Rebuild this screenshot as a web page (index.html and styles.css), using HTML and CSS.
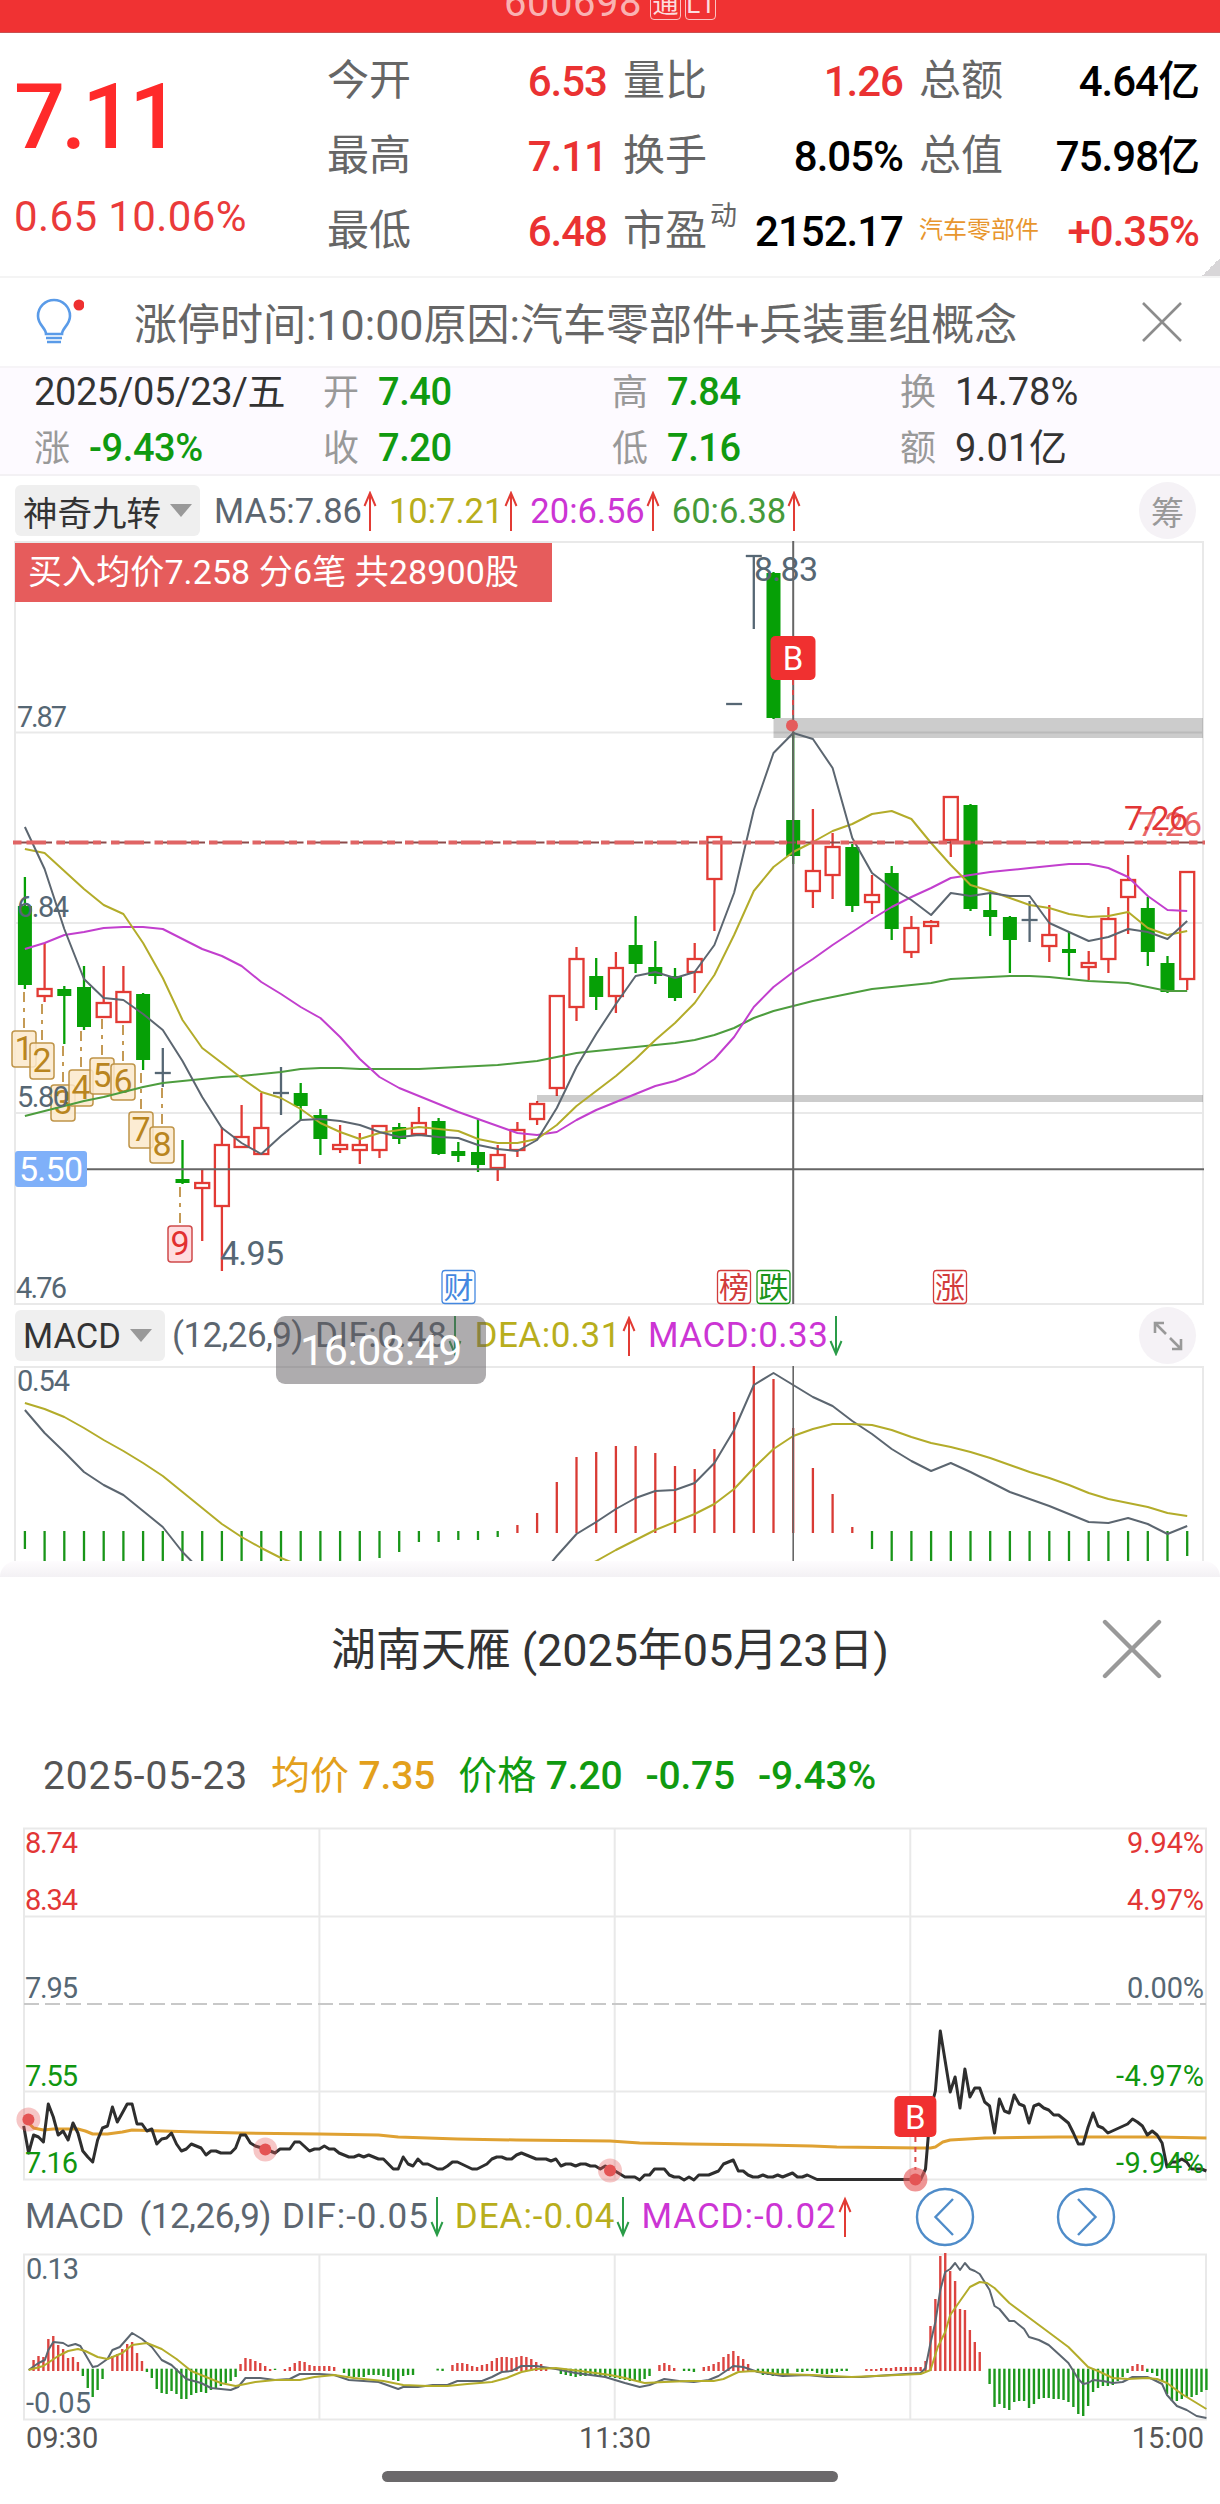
FILE: index.html
```html
<!DOCTYPE html>
<html lang="zh-CN">
<head>
    <meta charset="UTF-8">
    <meta name="viewport" content="width=device-width, initial-scale=1.0">
    <title>湖南天雁 600698</title>
    <link rel="stylesheet" href="styles.css">
</head>
<body>
    <header class="top-bar">
        <span class="code">600698</span>
        <span class="mark">通</span>
        <span class="mark">L1</span>
    </header>

    <section class="quote">
        <div class="price">
            <div class="last">7.11</div>
            <div class="change">0.65 10.06%</div>
        </div>
        <div class="stats">
            <div class="stat"><span>今开</span><b class="up">6.53</b></div>
            <div class="stat"><span>量比</span><b class="up">1.26</b></div>
            <div class="stat"><span>总额</span><b>4.64亿</b></div>
            <div class="stat"><span>最高</span><b class="up">7.11</b></div>
            <div class="stat"><span>换手</span><b>8.05%</b></div>
            <div class="stat"><span>总值</span><b>75.98亿</b></div>
            <div class="stat"><span>最低</span><b class="up">6.48</b></div>
            <div class="stat"><span>市盈<sup>动</sup></span><b>2152.17</b></div>
            <div class="stat"><span class="sector">汽车零部件</span><b class="up">+0.35%</b></div>
        </div>
        <div class="corner"></div>
    </section>

    <section class="notice">
        <svg class="bulb" width="50" height="50" viewBox="0 0 50 50">
            <path d="M12 37C12 31 4 28 4 19a16 16 0 0 1 32 0c0 9-8 12-8 18z" fill="none" stroke="#5a9be8" stroke-width="2.6"/>
            <path d="M12 41h16M13 45h14" stroke="#5a9be8" stroke-width="2.4"/>
            <circle cx="45" cy="8" r="5.5" fill="#ee3030"/>
        </svg>
        <p>涨停时间:10:00原因:汽车零部件+兵装重组概念</p>
        <svg class="notice-close" width="40" height="40" viewBox="0 0 40 40">
            <path d="M1 1L39 39M39 1L1 39" stroke="#8c8c8c" stroke-width="2.6"/>
        </svg>
    </section>

    <section class="ohlc">
        <div class="date">2025/05/23/五</div>
        <div><i>开</i><b class="down">7.40</b></div>
        <div><i>高</i><b class="down">7.84</b></div>
        <div><i>换</i><b class="plain">14.78%</b></div>
        <div><i>涨</i><b class="down">-9.43%</b></div>
        <div><i>收</i><b class="down">7.20</b></div>
        <div><i>低</i><b class="down">7.16</b></div>
        <div><i>额</i><b class="plain">9.01亿</b></div>
    </section>

    <section class="indicator ma-head">
        <button class="picker picker-ma">神奇九转<svg width="22" height="13"><path d="M0 0h22L11 13z" fill="#999"/></svg></button>
        <span class="c-dif">MA5:7.86<svg class="arrow"><use href="#arrow-up"/></svg></span>
        <span class="c-dea">10:7.21<svg class="arrow"><use href="#arrow-up"/></svg></span>
        <span class="c-macd">20:6.56<svg class="arrow"><use href="#arrow-up"/></svg></span>
        <span class="c-ma60">60:6.38<svg class="arrow"><use href="#arrow-up"/></svg></span>
        <span class="round">筹</span>
    </section>

    <div class="kline">
        <svg id="kline" width="1220" height="765"></svg>
        <div class="banner">买入均价7.258 分6笔 共28900股</div>
    </div>

    <section class="indicator macd-head">
        <button class="picker picker-macd">MACD<svg width="22" height="13"><path d="M0 0h22L11 13z" fill="#999"/></svg></button>
        <span class="c-dif args">(12,26,9)</span>
        <span class="c-dif">DIF:0.48<svg class="arrow"><use href="#arrow-down"/></svg></span>
        <span class="c-dea">DEA:0.31<svg class="arrow"><use href="#arrow-up"/></svg></span>
        <span class="c-macd">MACD:0.33<svg class="arrow"><use href="#arrow-down"/></svg></span>
        <span class="round">
            <svg width="30" height="30" viewBox="0 0 30 30"><path d="M13 13L2 2M2 12V2h9M17 17l11 11M28 18v10h-9" fill="none" stroke="#999" stroke-width="2.6"/></svg>
        </span>
        <div class="clock">16:08:49</div>
    </section>

    <svg id="macd" class="macd-chart" width="1220" height="195"></svg>

    <div class="sheet-edge"></div>
    <section class="sheet">
        <div class="sheet-title">
            <h1>湖南天雁 (2025年05月23日)</h1>
            <svg class="sheet-close" width="60" height="60" viewBox="0 0 60 60">
                <path d="M3 3L57 57M57 3L3 57" stroke="#999" stroke-width="4.4" stroke-linecap="round"/>
            </svg>
        </div>
        <div class="legend">
            <span class="day">2025-05-23</span>
            <span class="avg">均价 <b>7.35</b></span>
            <span class="down">价格 <b>7.20</b></span>
            <b class="down">-0.75</b>
            <b class="down">-9.43%</b>
        </div>

        <svg id="minute" class="minute-chart" width="1220" height="366"></svg>

        <div class="indicator minute-head">
            <span class="c-dif args">MACD <em>(12,26,9)</em></span>
            <span class="c-dif">DIF:-0.05<svg class="arrow"><use href="#arrow-down"/></svg></span>
            <span class="c-dea">DEA:-0.04<svg class="arrow"><use href="#arrow-down"/></svg></span>
            <span class="c-macd">MACD:-0.02<svg class="arrow"><use href="#arrow-up"/></svg></span>
            <svg class="nav prev" width="60" height="60" viewBox="0 0 60 60">
                <circle cx="30" cy="30" r="28" fill="none" stroke="#4f8cc9" stroke-width="2.4"/>
                <path d="M38 12L20.500 30 38 48" fill="none" stroke="#4f8cc9" stroke-width="2.4"/>
            </svg>
            <svg class="nav next" width="60" height="60" viewBox="0 0 60 60">
                <circle cx="30" cy="30" r="28" fill="none" stroke="#4f8cc9" stroke-width="2.4"/>
                <path d="M22 12L39.500 30 22 48" fill="none" stroke="#4f8cc9" stroke-width="2.4"/>
            </svg>
        </div>

        <svg id="minuteMacd" class="minute-macd" width="1220" height="172"></svg>

        <div class="axis"><span>09:30</span><span>11:30</span><span>15:00</span></div>
    </section>
    <div class="home-bar"></div>

    <svg width="0" height="0" class="defs">
        <symbol id="arrow-up" viewBox="0 0 14 40"><path d="M7 40V2M1.500 15L7 2l5.500 13" fill="none" stroke="#e23b34" stroke-width="2"/></symbol>
        <symbol id="arrow-down" viewBox="0 0 14 40"><path d="M7 0v38M1.500 25L7 38l5.500-13" fill="none" stroke="#2a9c48" stroke-width="2"/></symbol>
    </svg>
    <script src="charts.js"></script>
</body>
</html>
```
FILE: styles.css
```css
* {
    box-sizing: border-box;
}
body {
    margin: 0;
    width: 1220px;
    height: 2504px;
    overflow: hidden;
    background-color: #fff;
    font-family: Roboto, "Noto Sans CJK SC", sans-serif;
    color: #333;
}
svg {
    display: block;
    flex: none;
}
b {
    font-weight: 500;
}
.up {
    color: #ea3232;
}
.down {
    color: #109a10;
}
.defs {
    position: absolute;
}

/* top bar */
.top-bar {
    display: flex;
    justify-content: center;
    align-items: flex-end;
    gap: 4px;
    height: 33px;
    padding-bottom: 12px;
    overflow: hidden;
    background-color: #f03233;
    border-bottom: 1px solid #c95050;
    color: rgba(255, 255, 255, 0.65);
}
.code {
    font-size: 40px;
    line-height: 34px;
    margin-right: 4px;
    letter-spacing: 0.5px;
}
.mark {
    width: 31px;
    height: 32px;
    border: 1.5px solid rgba(255, 255, 255, 0.7);
    border-radius: 4px;
    font-size: 26px;
    line-height: 30px;
    text-align: center;
    color: rgba(255, 255, 255, 0.85);
}

/* quote */
.quote {
    position: relative;
    display: flex;
    height: 243px;
    padding-top: 10px;
}
.price {
    width: 327px;
    padding: 23px 0 0 14px;
    color: #ff2a2a;
}
.last {
    font-size: 90px;
    font-weight: 500;
    line-height: 104px;
    letter-spacing: -4px;
}
.change {
    margin-top: 17px;
    font-size: 42px;
    line-height: 60px;
    letter-spacing: 0.4px;
    color: #ea3a3a;
}
.stats {
    display: grid;
    grid-template-columns: 280px 280px 280px;
    grid-auto-rows: 75px;
    column-gap: 16px;
}
.stat {
    display: flex;
    justify-content: space-between;
    align-items: center;
    font-size: 42px;
    line-height: 75px;
    color: #666;
    white-space: nowrap;
}
.stat b {
    position: relative;
    top: 1px;
    color: #000;
    letter-spacing: -1px;
    font-weight: 500;
}
.stat b.up {
    color: #ea3232;
}
.stat sup {
    display: inline-block;
    font-size: 27px;
    line-height: 27px;
    vertical-align: 20px;
    margin-left: 3px;
}
.stat .sector {
    font-size: 24px;
    color: #e8962e;
}
.corner {
    position: absolute;
    right: 0;
    bottom: 0;
    width: 18px;
    height: 18px;
    background: linear-gradient(135deg, transparent 50%, #d8d6d8 50%);
}

/* notice */
.notice {
    display: flex;
    align-items: center;
    height: 92px;
    padding-left: 34px;
    border-top: 2px solid #f4f4f4;
    border-bottom: 2px solid #f6f4f7;
}
.notice p {
    width: 1058px;
    margin: -3px 0 0;
    padding-left: 50px;
    font-size: 43px;
    color: #666;
    white-space: nowrap;
}

/* open high low close */
.ohlc {
    display: grid;
    grid-template-columns: 289px 289px 288px 300px;
    grid-auto-rows: 48px;
    row-gap: 8px;
    height: 108px;
    padding: 0 0 0 34px;
    background-color: #fdfaff;
    border-bottom: 2px solid #f3f1f4;
    font-size: 38px;
    line-height: 48px;
    white-space: nowrap;
}
.ohlc i {
    font-style: normal;
    font-size: 36px;
    color: #999;
    margin-right: 19px;
}
.ohlc b {
    font-weight: 500;
    letter-spacing: -0.4px;
}
.ohlc .plain {
    font-weight: 400;
    letter-spacing: 0;
}
.date {
    letter-spacing: -0.4px;
}

/* indicator rows */
.indicator {
    position: relative;
    display: flex;
    align-items: center;
    font-size: 35px;
    white-space: nowrap;
}
.indicator span {
    display: flex;
    align-items: center;
}
.indicator em {
    font-style: normal;
    margin-left: 15px;
    letter-spacing: -0.5px;
}
.arrow {
    width: 14px;
    height: 40px;
    margin-left: 1px;
}
.ma-head {
    height: 64px;
    padding: 9px 24px 4px 15px;
    font-size: 34.5px;
    gap: 12px;
}
.macd-head {
    height: 61px;
    padding: 5px 24px 5px 15px;
    gap: 12px;
    letter-spacing: 0.5px;
}
.macd-head .args {
    margin-left: -5px;
    letter-spacing: -0.6px;
}
.picker {
    display: flex;
    align-items: center;
    gap: 9px;
    height: 51px;
    padding: 0 0 0 8px;
    border: 0;
    border-radius: 6px;
    background-color: #efefef;
    font-family: inherit;
    font-size: 34.5px;
    color: #333;
}
.picker-ma {
    width: 185px;
    margin-right: 2px;
}
.picker-macd {
    width: 150px;
}
.c-dif {
    color: #5c6670;
}
.c-dea {
    color: #b8ae1c;
}
.c-macd {
    color: #cc35d4;
}
.c-ma60 {
    color: #459a3a;
}
.indicator .round {
    justify-content: center;
    width: 57px;
    height: 57px;
    margin: -3px 0 -3px auto;
    border-radius: 50%;
    background-color: #f5f2f6;
    font-size: 33px;
    color: #999;
}
.clock {
    position: absolute;
    left: 276px;
    top: 11px;
    z-index: 2;
    width: 210px;
    height: 68px;
    border-radius: 9px;
    background-color: rgba(93, 90, 93, 0.5);
    font-size: 43px;
    line-height: 69px;
    text-align: center;
    color: #fff;
    letter-spacing: -0.5px;
}

/* charts */
.kline {
    position: relative;
    height: 765px;
}
.banner {
    position: absolute;
    left: 15px;
    top: 3px;
    width: 537px;
    height: 59px;
    padding-left: 13px;
    background-color: #e65c5c;
    font-size: 34px;
    line-height: 58px;
    letter-spacing: 0.1px;
    color: #fff;
    white-space: nowrap;
}
.macd-chart {
    overflow: hidden;
}
.minute-chart,
.minute-macd {
    overflow: visible;
}
.label {
    font-size: 29px;
    fill: #566774;
}
.label-big {
    font-size: 34px;
    fill: #566774;
}
.t-red {
    fill: #e23636;
}
.t-green {
    fill: #109610;
}
.grid {
    stroke: #e9e9e9;
    stroke-width: 2;
    fill: none;
}
.tag {
    font-size: 30px;
    text-anchor: middle;
}
.buy {
    font-size: 33px;
    fill: #fff;
    text-anchor: middle;
}

/* bottom sheet */
.sheet-edge {
    height: 16px;
    border-radius: 24px 24px 0 0;
    background: linear-gradient(#fefcfe, #f3f1f4);
}
.sheet {
    background-color: #fff;
}
.sheet-title {
    position: relative;
    display: flex;
    justify-content: center;
    align-items: center;
    height: 144px;
}
.sheet-title h1 {
    margin: -5px 0 0;
    font-size: 45px;
    font-weight: 400;
    letter-spacing: -0.1px;
    color: #333;
}
.sheet-close {
    position: absolute;
    right: 58px;
    top: 42px;
}
.legend {
    display: flex;
    align-items: baseline;
    height: 99px;
    padding: 32px 0 0 43px;
    gap: 23px;
    font-size: 39px;
    line-height: 46px;
    color: #555;
}
.legend .day {
    letter-spacing: 0.8px;
}
.legend b {
    letter-spacing: -0.2px;
}
.legend .avg {
    color: #e3a01c;
}
.minute-head {
    height: 64px;
    padding: 0 0 3px 25px;
    gap: 11px;
    letter-spacing: 0.95px;
}
.minute-head .args {
    letter-spacing: 0;
}
.minute-head .arrow {
    height: 48px;
    width: 14px;
}
.nav.prev {
    margin-left: 52px;
}
.nav.next {
    margin-left: 70px;
}
.axis {
    display: flex;
    justify-content: space-between;
    height: 34px;
    padding: 0 16px 0 26px;
    font-size: 29px;
    line-height: 32px;
    color: #555;
}
.home-bar {
    width: 456px;
    height: 11px;
    margin: 15px auto 0;
    border-radius: 6px;
    background-color: #6b696b;
}
```
FILE: charts.js
```js
const RED = '#e23a34';
const GREEN = '#06a006';
const GREY = '#566774';

function el(svg, tag, attrs, text) {
    const node = document.createElementNS('http://www.w3.org/2000/svg', tag);
    for (const key in attrs) node.setAttribute(key, attrs[key]);
    if (text !== undefined) node.textContent = text;
    svg.appendChild(node);
    return node;
}
function line(svg, x1, y1, x2, y2, stroke, width, extra) {
    el(svg, 'line', Object.assign({ x1, y1, x2, y2, stroke, 'stroke-width': width }, extra));
}
function curve(svg, points, stroke, width) {
    el(svg, 'polyline', { points: points.map(p => p.join(',')).join(' '), fill: 'none', stroke, 'stroke-width': width, 'stroke-linejoin': 'round' });
}
function label(svg, x, y, text, cls, width, anchor) {
    const attrs = { x, y, class: cls };
    if (width) attrs.textLength = width;
    if (anchor) attrs['text-anchor'] = anchor;
    return el(svg, 'text', attrs, text);
}

// ---- daily K line ----
const dayX = i => 24.9 + 19.7 * i;
const k = document.getElementById('kline');

// kind, high, body top, body bottom, low
const candles = [
    ['g', 337, 366, 445, 449], ['r', 403, 449, 456, 462], ['g', 446, 449, 456, 504], ['g', 426, 447, 487, 490],
    ['r', 426, 463, 477, 477], ['r', 426, 452, 482, 482], ['g', 453, 454, 520, 530], ['x', 508, 533, 533, 547],
    ['g', 600, 639, 643, 644], ['r', 630, 643, 648, 701], ['r', 587, 605, 666, 731], ['r', 565, 597, 607, 607],
    ['r', 553, 588, 614, 614], ['x', 527, 553, 553, 575], ['g', 543, 553, 566, 580], ['g', 569, 575, 599, 615],
    ['r', 585, 605, 609, 613], ['r', 593, 605, 610, 624], ['r', 586, 586, 610, 618], ['g', 583, 587, 599, 604],
    ['r', 567, 583, 594, 594], ['g', 578, 581, 614, 615], ['g', 602, 611, 616, 622], ['g', 579, 612, 625, 632],
    ['r', 605, 615, 628, 641], ['r', 582, 590, 610, 617], ['r', 561, 564, 579, 585], ['r', 455, 456, 548, 556],
    ['r', 407, 419, 467, 481], ['g', 418, 436, 457, 470], ['r', 412, 428, 456, 473], ['g', 376, 405, 424, 433],
    ['g', 401, 427, 436, 444], ['g', 428, 436, 458, 461], ['r', 403, 419, 432, 453], ['r', 297, 297, 339, 391],
    ['x', 164, 164, 164, 164], ['x', 16, 16, 16, 89], ['g', 32, 33, 178, 179], ['g', 192, 280, 316, 324],
    ['r', 269, 331, 351, 368], ['r', 293, 307, 335, 359], ['g', 304, 307, 366, 372], ['r', 335, 355, 362, 374],
    ['g', 326, 333, 389, 400], ['r', 376, 388, 412, 418], ['r', 380, 382, 386, 404], ['r', 257, 257, 300, 317],
    ['g', 264, 265, 369, 371], ['g', 353, 370, 377, 396], ['g', 376, 377, 400, 433], ['x', 361, 380, 380, 402],
    ['r', 365, 395, 406, 422], ['g', 392, 409, 413, 436], ['r', 411, 423, 427, 440], ['r', 367, 379, 419, 433],
    ['r', 315, 340, 357, 394], ['g', 357, 368, 412, 426], ['g', 416, 423, 452, 453], ['r', 332, 332, 439, 450]
];
const ma5 = [287, 329, 389, 439, 458, 460, 474, 490, 521, 557, 588, 603, 614, 596, 580, 579, 581, 585, 592, 597, 595, 597, 598, 605, 609, 611, 600, 568, 527, 494, 464, 436, 432, 438, 432, 405, 353, 270, 213, 193, 199, 228, 298, 333, 348, 360, 375, 353, 356, 353, 356, 356, 383, 392, 401, 397, 389, 392, 399, 381];
const ma10 = [309, 313, 331, 349, 365, 374, 403, 438, 480, 508, 523, 538, 552, 558, 569, 583, 592, 599, 593, 590, 587, 589, 591, 599, 603, 603, 599, 585, 566, 551, 536, 519, 500, 483, 463, 435, 395, 351, 327, 312, 302, 291, 284, 274, 271, 279, 303, 325, 345, 351, 358, 365, 368, 374, 377, 376, 372, 388, 395, 391];
const ma20 = [409, 403, 395, 392, 388, 387, 387, 389, 399, 409, 416, 426, 442, 454, 467, 478, 497, 519, 537, 548, 556, 564, 572, 579, 586, 593, 595, 592, 580, 570, 562, 554, 546, 541, 533, 519, 497, 467, 447, 432, 419, 405, 392, 379, 367, 357, 348, 338, 335, 332, 330, 328, 326, 324, 324, 328, 337, 356, 370, 371];
const ma60 = [576, 571, 566, 561, 557, 552, 547, 543, 541, 539, 537, 536, 534, 532, 529, 528, 528, 529, 529, 529, 529, 528, 527, 526, 525, 523, 521, 517, 513, 511, 509, 507, 505, 503, 500, 495, 488, 478, 471, 466, 461, 457, 453, 449, 447, 445, 443, 439, 438, 437, 436, 436, 437, 439, 441, 442, 443, 447, 451, 451];

el(k, 'rect', { x: 15, y: 2, width: 1188, height: 762, class: 'grid' });
[192.5, 383, 573].forEach(y => el(k, 'path', { d: `M15 ${y}H1203`, class: 'grid' }));

candles.forEach(([kind, high, top, bottom, low], i) => {
    const x = dayX(i);
    if (kind === 'g') {
        line(k, x, high, x, low, GREEN, 2.3);
        el(k, 'rect', { x: x - 7, y: top, width: 14, height: bottom - top, fill: GREEN });
    } else if (kind === 'r') {
        line(k, x, high, x, top, RED, 2.3);
        line(k, x, bottom, x, low, RED, 2.3);
        el(k, 'rect', { x: x - 7, y: top, width: 14, height: bottom - top, fill: 'none', stroke: RED, 'stroke-width': 2.3 });
    } else {
        line(k, x, high, x, low, GREY, 2.3);
        line(k, x - 8, top, x + 8, top, GREY, 2.3);
    }
});

el(k, 'rect', { x: 773.5, y: 178, width: 429.5, height: 20, fill: '#000', 'fill-opacity': 0.2 });
el(k, 'rect', { x: 537, y: 555, width: 666, height: 7, fill: '#000', 'fill-opacity': 0.2 });

// magic nine-turn badges
const turns = [[24, 491], [42, 503], [63, 545], [81, 530], [102, 518], [123, 524], [141, 572], [162, 587], [180, 686]];
turns.forEach(([x, y], i) => {
    const last = i === 8;
    line(k, x, y - 39, x, y, '#c49a55', 2, { 'stroke-dasharray': '10 6 4 6' });
    el(k, 'rect', { x: x - 12, y: y, width: 24, height: 36, rx: 3, fill: last ? '#ffdde0' : '#fbe9cb', 'fill-opacity': last ? 1 : 0.85, stroke: last ? '#cf4a4a' : '#bf9448', 'stroke-width': 1.5 });
    const t = label(k, x, y + 29, String(i + 1), 'label-big', 0, 'middle');
    t.style.fill = last ? '#e23030' : '#b98520';
});

curve(k, ma60.map((y, i) => [dayX(i), y]), '#4d9d3e', 2);
curve(k, ma20.map((y, i) => [dayX(i), y]), '#c23fce', 2);
curve(k, ma10.map((y, i) => [dayX(i), y]), '#b3ac2a', 2);
curve(k, ma5.map((y, i) => [dayX(i), y]), '#5c6670', 2);

// cost line
line(k, 13, 302.5, 1205, 302.5, '#8c4a4a', 2, { 'stroke-dasharray': '39 4.500 50 5' });
line(k, 13, 302.5, 1205, 302.5, '#e06464', 4, { 'stroke-dasharray': '8.500 5 19.500 10.500 8.500 4 19.500 4.500 8 10' });

label(k, 17, 187, '7.87', 'label', 50);
label(k, 17, 377, '6.84', 'label', 52);
label(k, 17, 567, '5.80', 'label', 52);
label(k, 16, 758, '4.76', 'label', 51);
label(k, 754, 41, '8.83', 'label-big', 64);
label(k, 220, 725, '4.95', 'label-big', 64);
label(k, 1124, 290, '7.26', 'label-big t-red', 64);
label(k, 1138, 296, '7.26', 'label-big t-red', 64).style.opacity = 0.75;

// crosshair
line(k, 793.2, 1, 793.2, 764, '#666', 2);
line(k, 15, 629.3, 1204, 629.3, '#666', 2);
el(k, 'rect', { x: 15, y: 611, width: 72, height: 36, rx: 3, fill: '#7fb0f9' });
label(k, 19, 641, '5.50', 'label-big', 64).style.fill = '#fff';

function buyMark(svg, x, y, w, h, dotY) {
    line(svg, x, y + h, x, dotY - 8, '#d94848', 2, { 'stroke-dasharray': '5 5' });
    el(svg, 'rect', { x: x - w / 2, y, width: w, height: h, rx: 5, fill: '#f03030' });
    label(svg, x, y + h / 2 + 12, 'B', 'buy');
}
buyMark(k, 793, 96, 45, 44, 186);
el(k, 'circle', { cx: 792, cy: 185.5, r: 6, fill: '#e45c5c' });

[[458.500, '财', '#4488e0'], [734, '榜', '#d23c3c'], [773.5, '跌', '#1a951a'], [950, '涨', '#d23c3c']].forEach(([x, text, color]) => {
    el(k, 'rect', { x: x - 16.5, y: 730.5, width: 33, height: 33, rx: 3, fill: '#fff', stroke: color, 'stroke-width': 1.3 });
    label(k, x, 758, text, 'tag').style.fill = color;
});

// ---- daily MACD ----
const m = document.getElementById('macd');
el(m, 'path', { d: 'M15 200V1H1203V200', class: 'grid' });
const macdBars = [183, 195, 195, 195, 195, 195, 195, 195, 195, 195, 195, 195, 195, 195, 195, 195, 195, 195, 192, 186, 176, 176, 174, 174, 171, 159, 147, 116, 91, 86, 80, 80, 87, 100, 103, 83, 46, 0, 13, 62, 102, 128, 161, 183, 195, 195, 195, 195, 195, 195, 195, 195, 195, 195, 195, 195, 195, 195, 195, 190];
const dif = [44, 67, 86, 106, 119, 129, 145, 161, 186, 206, 230, 250, 260, 270, 280, 290, 300, 300, 300, 300, 300, 300, 290, 280, 260, 238, 214, 190, 168, 156, 143, 132, 125, 124, 117, 97, 64, 19, 7, 19, 31, 40, 55, 68, 83, 95, 105, 97, 106, 116, 126, 133, 140, 148, 156, 157, 152, 158, 168, 160];
const dea = [37, 43, 51, 62, 74, 85, 97, 110, 126, 142, 158, 171, 182, 192, 200, 210, 220, 230, 240, 245, 250, 250, 250, 245, 240, 235, 228, 217, 206, 195, 184, 174, 164, 156, 148, 138, 123, 102, 83, 70, 63, 58, 58, 59, 64, 71, 77, 81, 86, 92, 99, 106, 112, 119, 127, 133, 137, 141, 147, 150];
macdBars.forEach((y, i) => {
    const up = y < 165;
    line(m, dayX(i), y, dayX(i), up ? 167 : 165, up ? '#d93a34' : '#189518', 2.3);
});
curve(m, dif.map((y, i) => [dayX(i), y]), '#5c6670', 2);
curve(m, dea.map((y, i) => [dayX(i), y]), '#b3ac2a', 2);
line(m, 793.2, 0, 793.2, 195, '#666', 1.6);
label(m, 17, 25, '0.54', 'label', 53);

// ---- minute price ----
const minX = i => 23.7 + 4.928 * i;
const p = document.getElementById('minute');
const minuteLine = '0,306 1,333 2,315 3,317 4,322 5,284 6,297 7,315 8,311 9,320 10,303 11,313 12,331 13,337 14,342 15,320 16,308 17,306 18,287 19,302 20,293 21,284 22,284 23,304 24,304 25,311 26,309 27,324 28,319 29,318 30,313 31,324 32,331 33,329 34,324 35,326 36,328 37,335 38,331 39,331 40,333 42,333 43,328 44,315 45,315 46,323 47,326 49,329 51,333 52,329 54,329 55,322 56,322 58,331 59,329 60,329 61,326 62,329 63,329 64,333 66,337 67,337 68,335 69,337 70,335 72,339 73,339 75,349 76,349 77,337 78,344 79,346 80,339 81,344 82,344 84,349 85,349 86,346 87,342 88,342 91,349 92,349 94,344 95,339 96,337 97,337 98,339 99,339 100,335 101,333 104,339 106,339 107,341 108,339 109,346 110,344 111,344 112,346 113,344 114,344 115,346 116,346 117,349 118,346 119,350 120,351 122,357 124,357 125,360 126,355 127,355 128,349 130,349 131,355 132,357 133,357 134,360 135,357 136,360 137,355 139,355 141,351 142,344 144,340 145,351 146,351 147,355 148,357 149,357 150,355 151,357 152,357 153,355 154,357 156,353 157,357 158,357 159,355 161,359.500 182,359.500 183,349 184,290 185,271 186,211 188,272 189,257 190,288 191,249 192,277 193,268 194,268 195,282 196,286 197,313 198,279 199,291 200,293 201,275 202,284 203,286 204,303 205,286 206,284 207,288 208,290 209,295 210,295 212,303 213,313 214,324 215,324 216,307 217,293 218,306 219,308 220,313 224,304 225,299 226,302 227,306 228,315 229,311 230,315 231,323 232,347 233,342 234,342 235,339 236,342 237,349 239,349 240,351';
const averageLine = '1,303 2,308 4,310 6,309 11,309 12.5,311 14,314 17,314 20,312 22,310 28,311 35,312 44,313 60,314 72,315 76,317 88,319 100,320 119,321 125,323 135,324 150,325 160,326 165,327 182,328 184,328 185,327 186.5,322 188,320 195,318 210,317 230,317 240,318';
const difLine = '1,120 3,113 4.3,110 5,100 6,92 8,93 9,96 10.5,94 11.5,96 14,117 15,116 17,109 18,100 19.5,97 22,83 24,89 26,97 28,110 30,115 33,129 36,133 38,138 42,140 43.5,137 45,128 48,128 51,130 54,129 56,124 60,124 63,125 66,130 72,132 76,139 77,137 80,137 83,135 86,135 88,131 93,131 95,127 97,122 99,121 101,116 104,116 108,119 112,123 118,127 122,133 125,137 127,135 130,129 133,131 136,132 139,130 141,126 144,116 146,117 149,122 154,126 159,125 163,127 170,127 182,123 183,118 184,93 185,72 186,40 187,22 188,19 189,13 190,20 191,13 192,19 193,21 194,24 196,40 197,56 198,59 200,71 201,71 203,79 204,87 206,90 208,95 210,104 212,113 214,129 215,134 216,133 217,130 219,131 221,133 223,132 225,127 228,127 229,129 231,134 232,145 234,156 236,160 238,166 240,168';
const deaLine = '1,120 4,116 7,106 9,101 11,99 12.5,101 15,107 17,109 20,103 22,95 25,93 28,99 31,109 34,121 37,127 40,133 43,136 47,132 51,130 56,130 59,127 63,125 67,128 73,131 77,135 82,136 86,136 90,134 95,132 98,128 101,122 104,119 108,118 113,121 119,125 122,128 126,133 130,132 135,131 140,131 142,129 145,122 148,121 153,124 160,125 168,127 182,124 184,120 185.5,97 187,82 188,65 190,51 192,37 194,32 195.5,33 197,38 200,53 203,64 206,75 209,86 212,97 214,107 216,117 218,121 221,128 224,129 228,128 230,129 232,133 235,144 238,153 240,159';
const parse = s => s.split(' ').map(pair => {
    const [i, y] = pair.split(',').map(Number);
    return [minX(i).toFixed(1), y];
});

el(p, 'rect', { x: 24, y: 8.5, width: 1182, height: 351, class: 'grid' });
[319.4, 614.7, 910.3].forEach(x => el(p, 'path', { d: `M${x} 8.5V359.5`, class: 'grid' }));
[96.5, 271.5].forEach(y => el(p, 'path', { d: `M24 ${y}H1206`, class: 'grid' }));
line(p, 24, 184, 1206, 184, '#c8c8c8', 2, { 'stroke-dasharray': '15 6' });
curve(p, parse(averageLine), '#dfa132', 3);
curve(p, parse(minuteLine), '#2e2e2e', 3);
[['8.74', 33, 't-red', '9.94%'], ['8.34', 90, 't-red', '4.97%'], ['7.95', 178, '', '0.00%'], ['7.55', 266, 't-green', '-4.97%'], ['7.16', 353, 't-green', '-9.94%']].forEach(([left, y, cls, right]) => {
    label(p, 25, y, left, 'label ' + cls, 53);
    label(p, 1204, y, right, 'label ' + cls, right[0] === '-' ? 88 : 77, 'end');
});
buyMark(p, 915.4, 276, 42, 41, 358);
[[28.4, 299.5], [265.3, 329.5], [610, 350.5], [915.4, 359.5]].forEach(([x, y], i) => {
    el(p, 'circle', { cx: x, cy: y, r: 12, fill: '#e65c5c', 'fill-opacity': i === 3 ? 0.65 : 0.35 });
    el(p, 'circle', { cx: x, cy: y, r: 6, fill: '#e45454' });
});

// ---- minute MACD ----
const q = document.getElementById('minuteMacd');
el(q, 'rect', { x: 24, y: 4.5, width: 1182, height: 165, class: 'grid' });
[319.4, 614.7, 910.3].forEach(x => el(q, 'path', { d: `M${x} 4.5V169.5`, class: 'grid' }));
// runs of bars: first minute, then one end point per minute
const runs = [
    [2, 110, 106, 107, 89, 86, 95, 99, 108, 107, 112, 126, 138, 147, 140, 129],
    [18, 106, 104, 99, 94, 92, 103, 111, 122, 128, 139, 143, 144, 141, 144, 149, 149, 145, 143, 142, 143, 140, 138, 136, 133, 131, 127, 114, 108, 109, 111, 113, 116, 119, 120],
    [53, 119, 117, 113, 111, 112, 115, 116, 116, 116, 116, 117],
    [65, 123, 126, 127, 127, 127, 125, 125, 125, 126, 127, 130, 131, 126, 125, 125],
    [84, 120.5, 121],
    [87, 115, 113, 113, 114, 116, 117, 115, 114, 111, 108, 107, 107, 108, 107, 106, 107, 109, 112, 114, 117],
    [109, 124, 125, 126, 127, 126, 126, 125, 126, 127, 127, 127, 128, 129, 130, 131, 131, 131, 129, 126],
    [129, 115, 113, 115, 118], [134, 121, 121, 122],
    [138, 117, 116, 114, 112, 107, 104, 101, 106, 109, 114],
    [149, 123, 125, 125, 126, 126, 125, 124], [157, 122, 122, 121, 121, 123, 124, 124, 123, 122, 121, 121],
    [171, 119, 119, 119, 118, 118, 118, 117, 117, 117, 117, 117, 117, 111, 76, 49, 6, 3, 21, 31, 59, 60, 80, 92, 102],
    [196, 134, 157, 154, 158, 160, 152, 151, 151, 158, 154, 149, 148, 148, 149, 149, 150, 152, 157, 164, 166, 156, 142, 138, 136, 136, 135, 131, 127, 123, 116, 114, 115, 122, 123, 126, 131, 144, 151, 151, 149, 147, 147, 145, 142, 140]
];
runs.forEach(([start, ...ends]) => {
    ends.forEach((y, n) => {
        const up = y < 120;
        const x = minX(start + n);
        line(q, x, y, x, up ? 121 : 118.7, up ? '#dc4440' : '#1c981c', 2.4);
    });
});
curve(q, parse(difLine), '#5c6670', 2);
curve(q, parse(deaLine), '#b3ac2a', 2);
label(q, 26, 29, '0.13', 'label', 53);
label(q, 26, 163, '-0.05', 'label', 65);
```
